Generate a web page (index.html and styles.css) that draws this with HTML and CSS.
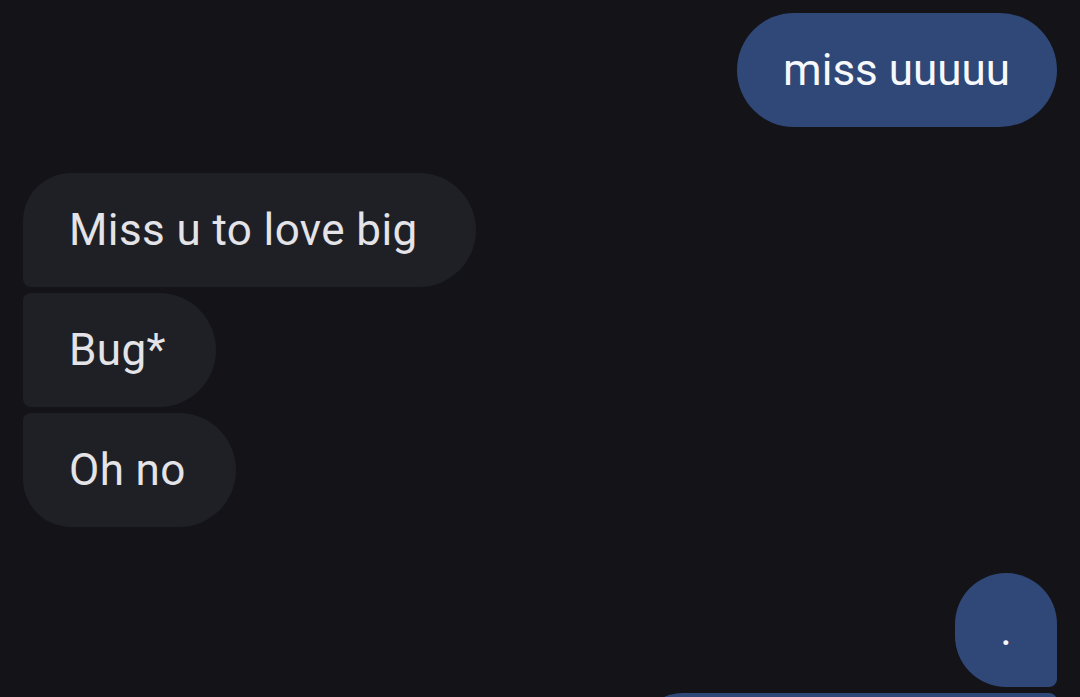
FILE: index.html
```html
<!DOCTYPE html>
<html>
<head>
<meta charset="utf-8">
<link rel="stylesheet" href="styles.css">
</head>
<body>
<div class="thread">
  <div class="row out">
    <div class="bubble sent single">miss uuuuu</div>
  </div>
  <div class="group in">
    <div class="bubble recv first">Miss u to love big</div>
    <div class="bubble recv mid">Bug*</div>
    <div class="bubble recv last">Oh no</div>
  </div>
  <div class="group out">
    <div class="bubble sent first dot">.</div>
    <div class="bubble sent next wide"></div>
  </div>
</div>
</body>
</html>
```

FILE: styles.css
```css
html, body {
  margin: 0;
  padding: 0;
  background: #131318;
  height: 100%;
  overflow: hidden;
}
.thread {
  display: flex;
  flex-direction: column;
  padding: 13px 23px 0 23px;
  gap: 46px;
  font-family: Roboto, "Noto Sans", "Liberation Sans", sans-serif;
}
.row, .group {
  display: flex;
  flex-direction: column;
  gap: 6px;
}
.out { align-items: flex-end; }
.in { align-items: flex-start; }
.bubble {
  box-sizing: border-box;
  height: 114px;
  padding: 0 47px 0 46px;
  font-size: 44px;
  line-height: 114px;
  white-space: nowrap;
  border-radius: 57px;
}
.sent {
  background: #304877;
  color: #f7f8fc;
}
.recv {
  background: #1f2025;
  color: #e3e3e8;
  letter-spacing: 0.4px;
  padding: 0 50px 0 46px;
}
.recv.first {
  padding-right: 58px;
  border-radius: 48px 57px 57px 8px;
}
.recv.mid { border-radius: 8px 57px 57px 8px; }
.recv.last { border-radius: 8px 57px 57px 48px; }
.sent.first { border-radius: 51px 51px 8px 51px; }
.sent.next { border-radius: 48px 8px 57px 57px; }
.dot {
  width: 102px;
  padding: 0;
  text-align: center;
}
.wide { width: 422px; }
```
